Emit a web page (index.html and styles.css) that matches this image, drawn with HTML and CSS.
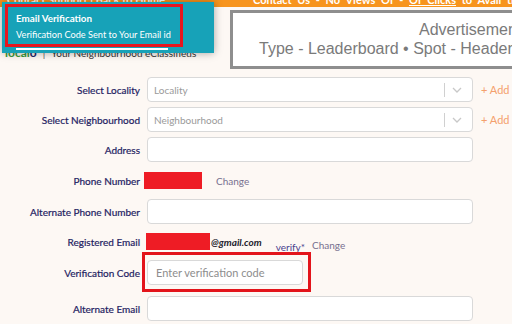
FILE: index.html
```html
<!DOCTYPE html>
<html lang="en">
<head>
<meta charset="utf-8">
<title>Post Ad</title>
<link rel="stylesheet" href="styles.css">
</head>
<body>
<div class="topbar">
  <div class="topbar-inner">
    <span class="top-left">Contact Support | Back to Home</span>
    <span class="top-right">Contact Us - No Views Of - <u>Of Clicks</u> to Avail this Offer</span>
  </div>
</div>

<header class="header">
  <div class="brand">
    <span class="logo"><span class="logo-g">local</span><span class="logo-n">o</span></span>
    <span class="sep">|</span>
    <span class="tagline">Your Neighbourhood eClassifieds</span>
  </div>
  <div class="ad">
    <div class="ad-title">Advertisement</div>
    <div class="ad-sub">Type - Leaderboard • Spot - Header • Size - 728x90</div>
  </div>
</header>

<form class="form">
  <div class="row">
    <label class="label">Select Locality</label>
    <div class="select"><span class="ph">Locality</span><span class="ind"><span class="ind-sep"></span><svg class="chev" width="10" height="6" viewBox="0 0 10 6"><path d="M1 1l4 4 4-4" fill="none" stroke="#c8c8c8" stroke-width="1.3"/></svg></span></div>
    <span class="add">+ Add</span>
  </div>
  <div class="row">
    <label class="label">Select Neighbourhood</label>
    <div class="select"><span class="ph">Neighbourhood</span><span class="ind"><span class="ind-sep"></span><svg class="chev" width="10" height="6" viewBox="0 0 10 6"><path d="M1 1l4 4 4-4" fill="none" stroke="#c8c8c8" stroke-width="1.3"/></svg></span></div>
    <span class="add">+ Add</span>
  </div>
  <div class="row row-gap">
    <label class="label">Address</label>
    <div class="input"></div>
  </div>
  <div class="row row-static row-gap">
    <label class="label">Phone Number</label>
    <span class="redact redact-phone"></span>
    <span class="change change-phone">Change</span>
  </div>
  <div class="row row-gap9">
    <label class="label">Alternate Phone Number</label>
    <div class="input"></div>
  </div>
  <div class="row row-static row-gap">
    <label class="label">Registered Email</label>
    <span class="redact redact-email"></span>
    <span class="gmail">@gmail.com</span>
    <span class="verify">verify*</span>
    <span class="change change-email">Change</span>
  </div>
  <div class="row row-gap11">
    <label class="label">Verification Code</label>
    <div class="code-wrap">
      <div class="input input-code"><span class="ph-code">Enter verification code</span></div>
      <span class="mark"></span>
    </div>
  </div>
  <div class="row">
    <label class="label">Alternate Email</label>
    <div class="input"></div>
  </div>
</form>

<div class="toast">
  <div class="toast-title">Email Verification</div>
  <div class="toast-msg">Verification Code Sent to Your Email id</div>
  <div class="toast-progress"></div>
  <span class="toast-mark"></span>
</div>
</body>
</html>
```

FILE: styles.css
```css
* { box-sizing: border-box; }
html, body { margin: 0; padding: 0; }
body {
  width: 512px;
  height: 324px;
  overflow: hidden;
  background: #fdf8f4;
  font-family: Lato, "Noto Sans", sans-serif;
  font-size: 10px;
  color: #1f1d62;
  position: relative;
}

/* top bar */
.topbar {
  height: 7px;
  background: #f7941d;
  overflow: hidden;
}
.topbar-inner {
  margin-top: -7px;
  height: 14px;
  line-height: 14px;
  font-size: 11px;
  font-weight: 700;
  color: #fff;
  white-space: nowrap;
  display: flex;
}
.top-left { padding-left: 7px; width: 253px; flex-shrink: 0; }
.top-right { word-spacing: 3px; }
.top-right u { text-decoration: underline; }

/* header */
.header {
  display: flex;
  padding-top: 3px;
  height: 62px;
}
.brand {
  width: 230px;
  flex-shrink: 0;
  padding: 37px 0 0 5px;
  line-height: 12px;
  white-space: nowrap;
  display: flex;
  align-items: baseline;
  gap: 6px;
}
.logo { font-weight: 700; font-size: 12px; }
.logo-g { color: #3b9a3c; }
.logo-n { color: #1d2a6b; }
.sep { color: #555; }
.tagline { color: #333; font-size: 10px; }
.ad {
  width: 340px;
  flex-shrink: 0;
  height: 59px;
  border: 3px solid #8e8e8e;
  background: #fff;
  padding: 7px 0 0 26px;
  font-family: "Liberation Sans", Arial, sans-serif;
  font-size: 16px;
  line-height: 19px;
  color: #7a7a7a;
  white-space: nowrap;
  overflow: hidden;
}
.ad-title { padding-left: 160px; }

/* form */
.form {
  margin-top: 8px;
}
.row {
  display: flex;
  align-items: center;
  height: 25px;
  margin-bottom: 5px;
}
.row-static { height: 17px; }
.row-gap { margin-bottom: 10px; }
.row-gap9 { margin-bottom: 9px; }
.row-gap11 { margin-bottom: 11px; }
.label {
  width: 140px;
  margin-right: 7px;
  text-align: right;
  font-size: 10px;
  color: #1f1d62;
  flex-shrink: 0;
  white-space: nowrap;
  -webkit-text-stroke: 0.2px #1f1d62;
}
.input, .select {
  width: 326px;
  height: 25px;
  background: #fff;
  border: 1px solid #d9d9d9;
  border-radius: 4px;
  flex-shrink: 0;
}
.select {
  display: flex;
  align-items: center;
  padding-left: 6px;
}
.ph { color: #9a9a9a; font-size: 10px; flex: 1; }
.ind { display: flex; align-items: center; height: 100%; }
.ind-sep { width: 1px; height: 14px; background: #d0d0d0; margin-right: 7px; }
.chev { margin-right: 10px; }
.add {
  margin-left: 8px;
  font-size: 11px;
  color: #f4a06c;
  white-space: nowrap;
}
.redact {
  display: block;
  height: 17px;
  background: #ee1c25;
}
.redact-phone { width: 58px; margin-left: -3px; }
.change { color: #77708f; font-size: 10px; }
.change-phone { margin-left: 14px; }
.redact-email { width: 64px; margin-left: -1px; }
.gmail {
  margin-left: 1px;
  font-weight: 700;
  font-style: italic;
  color: #1d1d2e;
}
.verify {
  margin-left: 14px;
  padding-top: 11px;
  color: #4b3f8f;
}
.change-email { margin-left: 7px; padding-top: 6px; }

.code-wrap { position: relative; }
.input-code {
  width: 156px;
  display: flex;
  align-items: center;
  padding-left: 8px;
}
.ph-code { color: #8d8d8d; font-size: 11px; white-space: nowrap; }
.mark {
  position: absolute;
  left: -5px;
  top: -8px;
  width: 169px;
  height: 40px;
  border: 3px solid #e3141b;
}

/* toast overlay */
.toast {
  position: absolute;
  left: 2px;
  top: 2px;
  width: 212px;
  height: 51px;
  background: #17a2b8;
  box-shadow: 0 0 8px rgba(0,0,0,0.35);
  padding: 9px 0 0 14px;
  color: #fff;
}
.toast-title { font-weight: 700; font-size: 9.8px; line-height: 14px; }
.toast-msg { font-size: 9.2px; line-height: 14px; margin-top: 3px; white-space: nowrap; }
.toast-progress {
  width: 152px;
  height: 2px;
  background: #fff;
  margin-top: 6px;
}
.toast-mark {
  position: absolute;
  left: 3px;
  top: 2px;
  width: 178px;
  height: 43px;
  border: 3px solid #e8151e;
}
```
